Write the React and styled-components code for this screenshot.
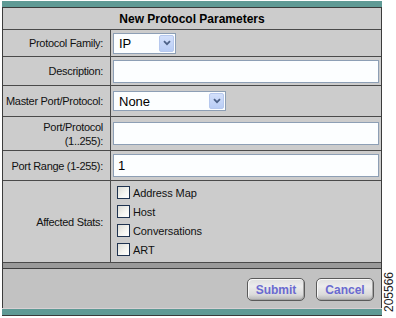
import React from "react";
import styled, { createGlobalStyle } from "styled-components";

const Global = createGlobalStyle`
  html, body { margin: 0; padding: 0; background: #ffffff; }
  body { font-family: "Liberation Sans", Arial, sans-serif; }
  * { box-sizing: border-box; }
`;

const Page = styled.div`
  position: relative;
  width: 396px;
  height: 318px;
  padding: 1px 0 0 2px;
  background: #ffffff;
`;

const Frame = styled.div`
  width: 380px;
  display: flex;
  flex-direction: column;
`;

const TealBar = styled.div`
  height: ${(p) => p.$h}px;
  background: #5f9a95;
  border-bottom: 1px solid #3a3a3a;
  border-top: ${(p) => (p.$lightTop ? "1px solid #d8d0d4" : "none")};
`;

const Body = styled.div`
  display: flex;
  flex-direction: column;
  border-left: 1px solid #3c3c3c;
  border-right: 1px solid #3c3c3c;
  background: #cccccc;
`;

const HeaderRow = styled.div`
  height: 22px;
  border-bottom: 1px solid #4a4a4a;
  display: flex;
  align-items: center;
  justify-content: center;
  font-weight: bold;
  font-size: 12px;
  color: #000;
  padding-top: 1px;
`;

const Row = styled.div`
  height: ${(p) => p.$h}px;
  display: flex;
  border-bottom: 1px solid #4a4a4a;
`;

const Label = styled.div`
  width: 108px;
  flex: none;
  border-right: 1px solid #4a4a4a;
  display: flex;
  flex-direction: column;
  align-items: flex-end;
  justify-content: center;
  padding-right: 7px;
  font-size: 11px;
  letter-spacing: -0.3px;
  line-height: 14px;
  color: #111;
  text-align: right;
  white-space: nowrap;
`;

const Value = styled.div`
  flex: 1;
  display: flex;
  align-items: ${(p) => (p.$top ? "flex-start" : "center")};
  padding-left: ${(p) => p.$pl ?? 2}px;
  padding-right: 2px;
  padding-top: ${(p) => p.$pt ?? 0}px;
`;

const TextInput = styled.div`
  width: 266px;
  height: 23px;
  background: #fcfeff;
  border: 1px solid #8d9fb5;
  font-size: 13px;
  color: #000;
  display: flex;
  align-items: center;
  padding-left: 4px;
`;

const SelectBox = styled.div`
  width: ${(p) => p.$w}px;
  height: ${(p) => p.$h}px;
  background: #fcfeff;
  border: 1px solid #8d9fb5;
  display: flex;
  align-items: stretch;
  padding: 1px;
`;

const SelectText = styled.span`
  flex: 1;
  font-size: 13px;
  color: #000;
  display: flex;
  align-items: center;
  padding-left: 4px;
`;

const ArrowButton = styled.span`
  width: 15px;
  flex: none;
  background: linear-gradient(#d3e0fb, #b9cdf5);
  border: 1px solid #b6c8ee;
  border-radius: 2px;
  display: flex;
  align-items: center;
  justify-content: center;
`;

const Chevron = () => (
  <svg width="8" height="6" viewBox="0 0 8 6">
    <path d="M1 1.2 L4 4.2 L7 1.2" fill="none" stroke="#4d6288" strokeWidth="1.8" />
  </svg>
);

const CheckList = styled.div`
  display: flex;
  flex-direction: column;
  gap: 6px;
`;

const CheckItem = styled.div`
  display: flex;
  align-items: center;
  height: 13px;
  font-size: 11px;
  letter-spacing: -0.1px;
  color: #111;
`;

const Box = styled.span`
  width: 13px;
  height: 13px;
  flex: none;
  border: 1px solid #1f3350;
  background: linear-gradient(135deg, #dcdcd6, #f6f6f2 60%, #ffffff);
  margin-right: 3px;
`;

const DarkBand = styled.div`
  height: 6px;
  background: #9a9a9a;
  border-bottom: 1px solid #3e3e3e;
  border-left: 1px solid #3c3c3c;
  border-right: 1px solid #3c3c3c;
`;

const ButtonBar = styled.div`
  height: 39px;
  background: #c2c2c2;
  border-left: 1px solid #3c3c3c;
  border-right: 1px solid #3c3c3c;
  display: flex;
  align-items: center;
  justify-content: flex-end;
  gap: 11px;
  padding-right: 7px;
`;

const Button = styled.button`
  width: 58px;
  height: 23px;
  border: 1px solid #5a5a5a;
  border-radius: 5px;
  background: linear-gradient(#dedede, #ececec 35%, #dadada 75%, #b4b4b4);
  box-shadow: inset 1px 1px 0 #f8f8f8, inset -1px -1px 0 #a6a6a6;
  font-family: "Liberation Sans", Arial, sans-serif;
  font-weight: bold;
  font-size: 12px;
  color: #6a6ad0;
  padding: 0;
  margin-top: 2px;
`;

const FigureNumber = styled.div`
  position: absolute;
  left: 384px;
  top: 272px;
  writing-mode: vertical-rl;
  transform: rotate(180deg);
  font-family: "Liberation Sans", Arial, sans-serif;
  font-size: 12px;
  line-height: 11px;
  color: #222;
`;

const fields = [
  { h: 27, label: ["Protocol Family:"], type: "select", w: 63, sh: 21, text: "IP" },
  { h: 29, label: ["Description:"], type: "input", text: "" },
  { h: 31, label: ["Master Port/Protocol:"], type: "select", w: 113, sh: 20, text: "None" },
  { h: 34, label: ["Port/Protocol", "(1..255):"], type: "input", text: "" },
  { h: 30, label: ["Port Range (1-255):"], type: "input", text: "1" },
];

const stats = ["Address Map", "Host", "Conversations", "ART"];

export default function App() {
  return (
    <Page>
      <Global />
      <Frame>
        <TealBar $h={7} />
        <Body>
          <HeaderRow>New Protocol Parameters</HeaderRow>
          {fields.map((f) => (
            <Row key={f.label[0]} $h={f.h}>
              <Label>
                {f.label.map((l) => (
                  <span key={l}>{l}</span>
                ))}
              </Label>
              <Value>
                {f.type === "select" ? (
                  <SelectBox $w={f.w} $h={f.sh}>
                    <SelectText>{f.text}</SelectText>
                    <ArrowButton>
                      <Chevron />
                    </ArrowButton>
                  </SelectBox>
                ) : (
                  <TextInput>{f.text}</TextInput>
                )}
              </Value>
            </Row>
          ))}
          <Row $h={82}>
            <Label>Affected Stats:</Label>
            <Value $top $pl={6} $pt={5}>
              <CheckList>
                {stats.map((s) => (
                  <CheckItem key={s}>
                    <Box />
                    {s}
                  </CheckItem>
                ))}
              </CheckList>
            </Value>
          </Row>
        </Body>
        <DarkBand />
        <ButtonBar>
          <Button>Submit</Button>
          <Button>Cancel</Button>
        </ButtonBar>
        <TealBar $h={8} $lightTop />
      </Frame>
      <FigureNumber>205566</FigureNumber>
    </Page>
  );
}
